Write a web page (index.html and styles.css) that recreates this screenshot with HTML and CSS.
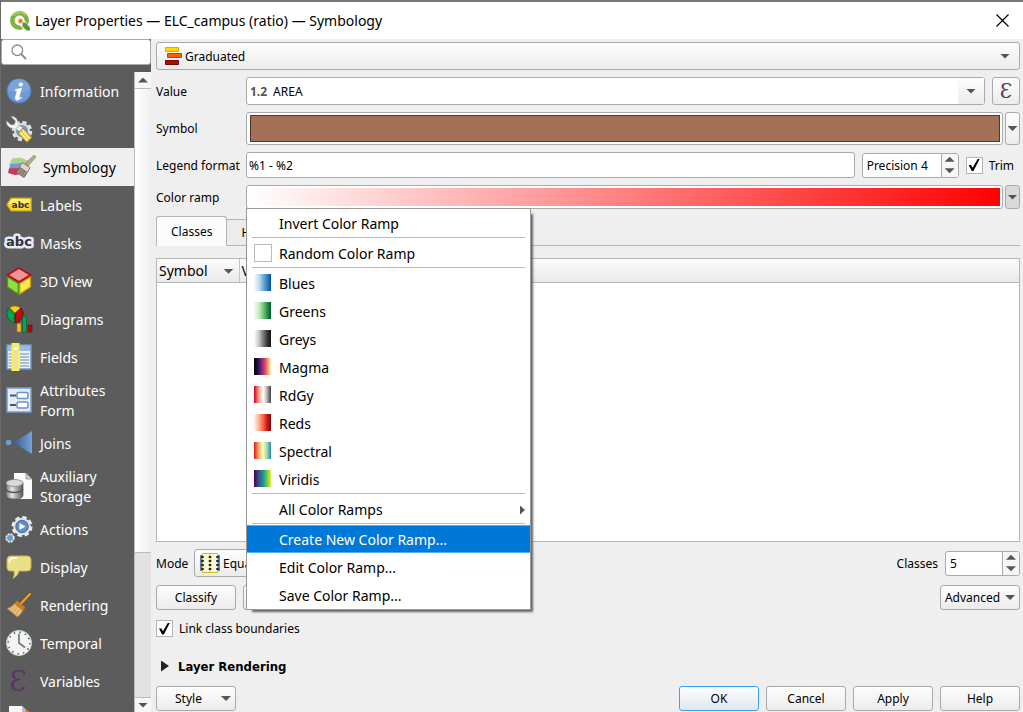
FILE: index.html
```html
<!DOCTYPE html>
<html lang="en">
<head>
<meta charset="utf-8">
<title>Layer Properties — ELC_campus (ratio) — Symbology</title>
<link rel="stylesheet" href="styles.css">
</head>
<body>
<div class="window">
  <header class="titlebar">
    <svg class="logo" viewBox="0 0 20 20" aria-hidden="true">
      <circle cx="9.500" cy="9.500" r="7.200" fill="none" stroke="#7eb344" stroke-width="4.600"/>
      <path d="M3 5a8 8 0 0 1 13-1" fill="none" stroke="#a3cc63" stroke-width="2"/>
      <path d="M8.500 8l5 .5 6.500 7.500v4h-4.500L8.500 13z" fill="#fff"/>
      <path d="M12.500 11.500h3l4.500 5v3h-3.500l-4-4z" fill="#5b9438"/>
      <circle cx="10.500" cy="10" r="2.800" fill="#f7c9a0"/>
      <circle cx="10.500" cy="10" r="1.900" fill="#ee7913"/>
    </svg>
    <h1 class="title">Layer Properties — ELC_campus (ratio) — Symbology</h1>
    <button class="close" aria-label="Close"><svg viewBox="0 0 13 13"><path d="M.5.5l12 12M12.500.5l-12 12" stroke="#000" fill="none" stroke-width="1.200"/></svg></button>
  </header>

  <div class="body">
    <aside class="sidebar">
      <label class="search">
        <svg viewBox="0 0 16 16" aria-hidden="true"><circle cx="6.300" cy="6.300" r="5.300" fill="none" stroke="#888" stroke-width="1.300"/><path d="M10.200 10.200L15 15" stroke="#888" stroke-width="1.800"/></svg>
        <input type="text" aria-label="Search">
      </label>
      <div class="list-area">
        <nav class="pages">
          <a href="#" class="page"><svg viewBox="0 0 26 26"><circle cx="13" cy="13" r="12.500" fill="#4d80bd"/><circle cx="13" cy="13" r="11.300" fill="#6e9bd1"/><path d="M2 12a11 11 0 0 1 22 0q-11 5-22 0" fill="#7ba4d7"/><circle cx="14.800" cy="6.500" r="2.100" fill="#fff"/><path d="M9.500 11.500l6-1.200-2.500 9q-.3 1.500 2.300-.3l.4.600q-3 3-5.300 2.500-1.700-.5-1-3l1.700-5.800q0-1-1.800-.8z" fill="#fff" stroke="#fff" stroke-width=".6"/></svg><span>Information</span></a>
          <a href="#" class="page"><svg viewBox="0 0 26 26"><circle cx="16" cy="15" r="8.500" fill="none" stroke="#e3e3e3" stroke-width="3.500" stroke-dasharray="4 2.700"/><circle cx="16" cy="15" r="7" fill="#6d96c8" stroke="#ddd" stroke-width="2"/><path d="M5 .5l4.500 4.500-1 3.500-3.500.5L.5 5Q0 10 5 12q3 .3 5 2.500l4-4Q12 8 11.500 5 10 0 5 .5z" fill="#f4f4f4" stroke="#aaa" stroke-width=".5"/><path d="M10 12.500l3.500-3.500 4 3-4 4z" fill="#eee" stroke="#777" stroke-width=".6"/><path d="M12 17.500l5-5.500 9 9.500-5 5z" fill="#e8c84e" stroke="#8c7520" stroke-width=".8"/><path d="M14.500 16.500l7 8M16.500 14.500l7 8" stroke="#fff09b" stroke-width="1.500"/></svg><span>Source</span></a>
          <a href="#" class="page selected"><svg viewBox="0 0 28 24"><path d="M4 3.500l8-1 8 3-4 6-15-1.500z" fill="#acd491"/><path d="M2.500 9l12-1v6L1 14z" fill="#749bc9"/><path d="M1 13.500l11-.5 2 6-7 1-7-2z" fill="#cf3854"/><path d="M26.500.5Q28 1 27.500 2.500L20 11l-3-2.500L25.500.7z" fill="#b7aa7d" stroke="#7c745b" stroke-width=".6"/><path d="M14 7.500l8 5-2.500 5L11.500 12z" fill="#ded9c6" stroke="#716d60" stroke-width=".8"/><path d="M11.500 12l8 5.500Q18 21 16 23L8 17.500q2-2 3.500-5.500z" fill="#817b70"/><path d="M13 14l-3 4M15 15.500l-2.500 4M17.500 17l-2.500 4" stroke="#b1aa99"/></svg><span>Symbology</span></a>
          <a href="#" class="page"><svg viewBox="0 0 26 26"><path d="M.7 12.500L5 6h20.300v13H5z" fill="#f4d83d" stroke="#c49e00" stroke-width="1.200"/><path d="M5.500 7H24v5H2z" fill="#ffed76"/><text x="14.500" y="16" text-anchor="middle" class="abc-label">abc</text></svg><span>Labels</span></a>
          <a href="#" class="page"><svg viewBox="0 0 26 26"><text x="13" y="16" text-anchor="middle" class="abc-mask">abc</text></svg><span>Masks</span></a>
          <a href="#" class="page"><svg viewBox="0 0 26 28"><path d="M13 1l11.500 7L13 15 1.500 8z" fill="#f49393" stroke="#b30d18" stroke-width="1.600"/><path d="M1.500 10l10.800 6.500v10.500L1.500 20z" fill="#91df3a" stroke="#4d9911" stroke-width="1.300"/><path d="M24.500 10l-10.800 6.500v10.500l10.800-7z" fill="#ffe453" stroke="#c6a000" stroke-width="1.300"/></svg><span>3D View</span></a>
          <a href="#" class="page"><svg viewBox="0 0 26 28"><path d="M9 8.500L3.500 3a8.500 8.500 0 0 1 11 0z" fill="#ffcf05" stroke="#9c7a00" stroke-width=".7"/><path d="M9 8.500v9A8.700 8.700 0 0 1 3 3z" fill="#00a650" stroke="#14542d" stroke-width=".8"/><path d="M9 8.500v9A8.700 8.700 0 0 0 15 3z" fill="#bf0d0d" stroke="#6b0000" stroke-width=".8"/><path d="M11 18.500h4v8.500h-4z" fill="#fcb72e" stroke="#a66f00" stroke-width=".6"/><path d="M16.500 11.500h4V27h-4z" fill="#00a853" stroke="#0b5a30" stroke-width=".6"/><path d="M22 20h4v7h-4z" fill="#b40c0c" stroke="#6b0000" stroke-width=".6"/></svg><span>Diagrams</span></a>
          <a href="#" class="page"><svg viewBox="0 0 26 28"><path d="M1 2h24v24H1z" fill="#f0f2f4" stroke="#6e94c6" stroke-width="1.600"/><path d="M2 3h22v5H2z" fill="#9bbce2"/><path d="M2.500 11h4M2.500 14h4M2.500 17h4M2.500 20h4M2.500 23h4M14 11h9M14 14h9M14 17h9M14 20h9M14 23h9" stroke="#6587b0" stroke-width="1.200"/><path d="M6.500 1h6v26h-6z" fill="#eadfb0" stroke="#fcf445" stroke-width="2"/><circle cx="9.500" cy="5.500" r="1.600" fill="#fff"/></svg><span>Fields</span></a>
          <a href="#" class="page"><svg viewBox="0 0 26 26"><path d="M1 1h24v24H1z" fill="#e9eaec" stroke="#749dcc" stroke-width="1.500"/><path d="M4 8.500h6M4 18h6" stroke="#375c83" stroke-width="2"/><rect x="11" y="5.500" width="11" height="6" rx="1.500" fill="#fff" stroke="#6b93c5" stroke-width="1.500"/><rect x="11" y="15" width="11" height="6" rx="1.500" fill="#fff" stroke="#6b93c5" stroke-width="1.500"/></svg><span>Attributes Form</span></a>
          <a href="#" class="page"><svg viewBox="0 0 26 26"><defs><linearGradient id="join"><stop offset="0" stop-color="#345e91"/><stop offset="1" stop-color="#77a2d8"/></linearGradient></defs><circle cx="2.500" cy="12.500" r="2.800" fill="#6e9bd1"/><path d="M7.500 12.500L26 1v23z" fill="url(#join)"/></svg><span>Joins</span></a>
          <a href="#" class="page"><svg viewBox="0 0 26 28"><defs><linearGradient id="drum"><stop offset="0" stop-color="#777"/><stop offset=".35" stop-color="#e5e5e5"/><stop offset="1" stop-color="#555"/></linearGradient></defs><path d="M8 1h12l6 6v20H8z" fill="#fbfbfb"/><path d="M20 1v6h6z" fill="#ccc" stroke="#777" stroke-width=".6"/><path d="M0 11v12q0 4 8.500 4t8.500-4V11z" fill="url(#drum)" stroke="#555" stroke-width=".7"/><ellipse cx="8.500" cy="11" rx="8.500" ry="3.500" fill="#dadada" stroke="#777" stroke-width=".7"/><path d="M0 17q1 3.500 8.500 3.500T17 17" fill="none" stroke="#555" stroke-width="1.300"/></svg><span>Auxiliary Storage</span></a>
          <a href="#" class="page"><svg viewBox="0 0 26 28"><circle cx="16" cy="11.500" r="9" fill="none" stroke="#eee" stroke-width="3" stroke-dasharray="4.300 2.770"/><circle cx="16" cy="11.500" r="7.800" fill="#fff" stroke="#e3e3e3" stroke-width="2"/><circle cx="16" cy="11.500" r="6.300" fill="#5e8fca" stroke="#2f5a8c" stroke-width=".8"/><path d="M13.500 8l6 3.500-6 3.500z" fill="#fff"/><circle cx="4" cy="23" r="3.800" fill="#6e9bd1" stroke="#e5e5e5" stroke-width="1.800" stroke-dasharray="2.200 .8"/></svg><span>Actions</span></a>
          <a href="#" class="page"><svg viewBox="0 0 26 26"><path d="M4.500 2h17Q25 2 25 5.500v8q0 3.500-3.500 3.500H13q-1 5-6 7.500 2-4 1-7.500H4.500Q1 17 1 13.500v-8Q1 2 4.500 2z" fill="#eae08a" stroke="#c7b24a"/><path d="M3.500 9V7Q3.500 4 8 4h3" fill="none" stroke="#fff" stroke-width="1.500"/></svg><span>Display</span></a>
          <a href="#" class="page"><svg viewBox="0 0 26 26"><path d="M24 2L15 11.500" stroke="#7d4b0b" stroke-width="3.600" stroke-linecap="round"/><path d="M24 2L15 11.500" stroke="#e7a03d" stroke-width="2.300" stroke-linecap="round"/><path d="M11 8.500l8.500 7-2.500 3-8.500-7z" fill="#ce7c1f"/><path d="M8.500 11.500l8.500 7q-2 4-5.500 6.500L1 16.500q5-1.500 7.500-5z" fill="#e7ba75" stroke="#b2772a" stroke-width=".8"/><path d="M8.500 13.500l-3.500 4.500M11 15.500l-3.500 4.500M13.500 17.500l-3.500 4.500" stroke="#cf9c55" stroke-width=".8"/></svg><span>Rendering</span></a>
          <a href="#" class="page"><svg viewBox="0 0 26 26"><circle cx="13" cy="13" r="12.500" fill="#f4f4f2" stroke="#d2d2d2"/><circle cx="13" cy="13" r="10.800" fill="none" stroke="#3b6ca5" stroke-width="1.600" stroke-dasharray="1.500 4.155"/><path d="M13 3.500V13l6 4.500" fill="none" stroke="#777" stroke-width="1.700"/></svg><span>Temporal</span></a>
          <a href="#" class="page"><svg viewBox="0 0 26 26"><text x="12" y="23" text-anchor="middle" class="epsilon">Ɛ</text></svg><span>Variables</span></a>
          <a href="#" class="page" aria-label="Metadata"><svg viewBox="0 0 26 26"><path d="M3 0h13l6 6v20H3z" fill="#f6f6f6"/><path d="M16 0v6h6z" fill="#bbb"/><path d="M19 2l6 5-4 4z" fill="#df693c"/></svg></a>
        </nav>
        <div class="scrollbar">
          <button class="scroll-end" aria-label="Scroll up"><i class="arrow up"></i></button>
          <div class="thumb"></div>
          <div class="groove"></div>
          <button class="scroll-end last" aria-label="Scroll down"><i class="arrow"></i></button>
        </div>
      </div>
    </aside>

    <main class="panel">
      <div class="combo raised">
        <svg class="graduated" viewBox="0 0 18 18" aria-hidden="true"><path d="M1.500.5h13v4h-13z" fill="#ffd800" stroke="#e0a800"/><path d="M3.500 6.500h14v4h-14z" fill="#ff5d0c" stroke="#c64200"/><path d="M1.500 13.500h13v4h-13z" fill="#b50d00" stroke="#7a0500"/></svg>
        <select aria-label="Renderer"><option>Graduated</option></select>
        <i class="arrow"></i>
      </div>

      <div class="row">
        <label class="name" for="value">Value</label>
        <div class="combo editable">
          <span class="type">1.2</span>
          <input id="value" type="text" value="AREA">
          <button class="drop" aria-label="Show fields"><i class="arrow"></i></button>
        </div>
        <button class="button expression" aria-label="Expression"><span class="eps">Ɛ</span></button>
      </div>

      <div class="row split tall">
        <span class="name">Symbol</span>
        <button class="swatch" aria-label="Change symbol"><span class="fill brown"></span></button>
        <button class="button side" aria-label="Symbol options"><i class="arrow"></i></button>
      </div>

      <div class="row legend">
        <label class="name" for="legend">Legend format</label>
        <input class="field grow" id="legend" type="text" value="%1 - %2">
        <div class="spin">
          <input type="text" aria-label="Precision" value="Precision 4" class="precision">
          <span class="steps"><button aria-label="Increase"><i class="arrow up"></i></button><button aria-label="Decrease"><i class="arrow"></i></button></span>
        </div>
        <label class="check"><input type="checkbox" checked>Trim</label>
      </div>

      <div class="row split ramp-row">
        <span class="name">Color ramp</span>
        <button class="swatch" aria-label="Edit color ramp"><span class="fill ramp"></span></button>
        <button class="button side pressed" aria-label="Color ramp menu"><i class="arrow"></i></button>
        <div class="menu" role="menu">
          <button role="menuitem">Invert Color Ramp</button>
          <hr>
          <button role="menuitem"><i class="chip none"></i>Random Color Ramp</button>
          <hr>
          <button role="menuitem"><i class="chip blues"></i>Blues</button>
          <button role="menuitem"><i class="chip greens"></i>Greens</button>
          <button role="menuitem"><i class="chip greys"></i>Greys</button>
          <button role="menuitem"><i class="chip magma"></i>Magma</button>
          <button role="menuitem"><i class="chip rdgy"></i>RdGy</button>
          <button role="menuitem"><i class="chip reds"></i>Reds</button>
          <button role="menuitem"><i class="chip spectral"></i>Spectral</button>
          <button role="menuitem"><i class="chip viridis"></i>Viridis</button>
          <hr>
          <button role="menuitem">All Color Ramps<i class="arrow right"></i></button>
          <hr>
          <button role="menuitem" class="active">Create New Color Ramp...</button>
          <button role="menuitem">Edit Color Ramp...</button>
          <button role="menuitem">Save Color Ramp...</button>
        </div>
      </div>

      <div class="tabs" role="tablist">
        <button class="tab current" role="tab">Classes</button>
        <button class="tab" role="tab">Histogram</button>
      </div>

      <div class="classes">
        <table>
          <thead><tr><th class="symbol-col"><span class="sort">Symbol<i class="arrow"></i></span></th><th class="values-col">Values</th><th>Legend</th></tr></thead>
        </table>
      </div>

      <div class="row mode">
        <label class="name" for="mode">Mode</label>
        <div class="combo raised mode-combo">
          <svg viewBox="0 0 20 20" aria-hidden="true"><path d="M1 2v16M19 2v16" stroke="#5683bb" stroke-width="2"/><path d="M2.500.5h15v19h-15zM10 0v20" fill="#fbf7dc" stroke="#d8bd22"/><path d="M2.500 3v14M10 3v14M17.500 3v14" stroke="#222" stroke-width="2.500" stroke-dasharray="2 2"/></svg>
          <select id="mode"><option>Equal Count (Quantile)</option></select>
        </div>
        <label class="count" for="count">Classes</label>
        <div class="spin">
          <input id="count" type="text" value="5" class="number">
          <span class="steps"><button aria-label="More classes"><i class="arrow up"></i></button><button aria-label="Fewer classes"><i class="arrow"></i></button></span>
        </div>
      </div>

      <div class="row actions">
        <button class="button">Classify</button>
        <button class="button small" aria-label="Add class"></button>
        <button class="button small" aria-label="Remove class"></button>
        <button class="button end advanced">Advanced<i class="arrow"></i></button>
      </div>

      <label class="check link"><input type="checkbox" checked>Link class boundaries</label>

      <button class="rendering"><i class="arrow expand"></i>Layer Rendering</button>

      <footer class="row footer">
        <button class="button style">Style<i class="arrow"></i></button>
        <button class="button end ok">OK</button>
        <button class="button">Cancel</button>
        <button class="button">Apply</button>
        <button class="button">Help</button>
      </footer>
    </main>
  </div>
</div>
</body>
</html>
```
FILE: styles.css
```css
* { box-sizing: border-box; }
body { margin: 0; }
body, button, input, select {
  font-family: "Noto Sans", "DejaVu Sans Condensed", sans-serif;
  font-size: 12px;
  color: #000;
}
button, input, select { margin: 0; padding: 0; border: 0; background: none; outline: 0; }
select { appearance: none; flex: 1; min-width: 0; }
svg { display: block; flex: none; }

.window {
  display: flex;
  flex-direction: column;
  height: 100vh;
  background: #efefef;
  border-left: 1px solid #6b6b6b;
  overflow: hidden;
}
.titlebar {
  display: flex;
  align-items: center;
  flex: none;
  height: 39px;
  padding: 0 14px 0 9px;
  background: #fff;
  border-top: 2px solid #777;
}
.logo { width: 20px; height: 20px; }
.title {
  flex: 1;
  margin: 0 0 0 5px;
  font: 400 14px "Noto Sans", sans-serif;
}
.close { width: 13px; height: 13px; }

.body { display: flex; flex: 1; min-height: 0; }

/* Page list */
.sidebar { display: flex; flex-direction: column; flex: none; width: 150px; background: #5c5c5c; }
.search {
  display: flex;
  align-items: center;
  flex: none;
  height: 26px;
  padding: 0 9px;
  margin-bottom: 7px;
  background: #fff;
  border: 1px solid #aaa;
  border-radius: 3px;
}
.search svg { width: 16px; height: 16px; }
.search input { flex: 1; min-width: 0; }
.list-area { display: flex; flex: 1; min-height: 0; }
.pages { flex: 1; overflow: hidden; }
.page {
  display: flex;
  align-items: center;
  gap: 8px;
  min-height: 38px;
  padding: 3px 14px 3px 5px;
  color: #fff;
  font: 14px/20px "Noto Sans", sans-serif;
  text-decoration: none;
}
.page span { padding-top: 2px; }
.page svg { width: 26px; height: 28px; overflow: visible; }
.page.selected { padding-left: 7px; gap: 7px; background: #efefef; color: #000; }
.page.selected svg { width: 28px; }
.abc-label { font: bold 9px "DejaVu Sans", sans-serif; fill: #333; }
.abc-mask {
  font: bold 13px "DejaVu Sans", sans-serif;
  fill: #333;
  stroke: #e8ebfa;
  stroke-width: 5px;
  stroke-linejoin: round;
  paint-order: stroke;
}
.epsilon { font: 28px "DejaVu Serif", serif; fill: #5a3264; }

.scrollbar {
  display: flex;
  flex-direction: column;
  flex: none;
  width: 17px;
  border-left: 1px solid #bbb;
  background: #fff;
}
.scroll-end {
  display: grid;
  place-items: center;
  flex: none;
  height: 17px;
  background: #f7f7f7;
  border-bottom: 1px solid #bbb;
}
.scroll-end.last { height: 15px; border-bottom: 0; border-top: 1px solid #bbb; }
.thumb { flex: 464; background: linear-gradient(90deg, #fff, #efefef); border-bottom: 1px solid #bbb; }
.groove { flex: 144; background: #e2e2e2; }

.arrow {
  flex: none;
  width: 10px;
  height: 5px;
  background: #555;
  clip-path: polygon(0 0, 100% 0, 50% 100%);
}
.arrow.up { clip-path: polygon(50% 0, 100% 100%, 0 100%); }
.arrow.right { width: 5px; height: 9px; clip-path: polygon(0 0, 100% 50%, 0 100%); }

/* Settings */
.panel {
  display: flex;
  flex-direction: column;
  flex: 1;
  min-width: 0;
  gap: 7px;
  padding: 3px 3px 1px 5px;
}
.row { display: flex; align-items: center; gap: 7px; flex: none; }
.name { flex: none; width: 83px; white-space: nowrap; }
.combo, .button, .field, .spin, .swatch {
  border: 1px solid #aaa;
  border-radius: 3px;
  background: #fff;
}
.combo { display: flex; align-items: center; flex: none; height: 28px; }
.raised, .button { background: linear-gradient(#fdfdfd, #ececec); }
.combo.raised { padding: 0 9px 0 7px; gap: 3px; }
.graduated { width: 18px; height: 18px; }
.combo.editable { flex: 1; padding-left: 3px; }
.type { color: #555; font-weight: bold; }
.combo input { flex: 1; min-width: 0; margin-left: 6px; }
.drop {
  display: grid;
  place-items: center;
  width: 26px;
  height: 26px;
  background: linear-gradient(#fdfdfd, #ececec);
}
.button {
  display: flex;
  align-items: center;
  justify-content: center;
  flex: none;
  width: 80px;
  height: 25px;
}
.button.expression { width: 28px; height: 28px; }
.eps { color: #5a3264; font: 20px/20px "DejaVu Serif", serif; }

.split { position: relative; gap: 2px; height: 24px; }
.split .name { width: 88px; }
.split.tall { height: 33px; }
.swatch { display: flex; flex: 1; height: 100%; padding: 2px 2px 2px 3px; }
.fill { flex: 1; align-self: stretch; }
.brown { background: #a57058; border: 1px solid #50352b; }
.ramp { background: linear-gradient(90deg, #fff, #f00); }
.button.side { width: 15px; height: 100%; }
.button.pressed { background: #dadada; }

.legend { height: 26px; }
.field { height: 26px; padding: 0 2px; }
.grow { flex: 1; min-width: 0; }
.spin { display: flex; flex: none; height: 25px; overflow: hidden; }
.spin input { padding-left: 4px; }
.precision { width: 78px; }
.number { width: 56px; }
.steps { display: flex; flex-direction: column; width: 17px; border-left: 1px solid #aaa; background: #f6f6f6; }
.steps button { display: grid; place-items: center; flex: 1; }
.check { display: flex; align-items: center; flex: none; gap: 6px; padding-right: 6px; }
.check input {
  appearance: none;
  display: grid;
  place-items: center;
  width: 17px;
  height: 17px;
  border: 1px solid #b5b5b5;
  background: #fff;
}
.check input:checked::before {
  content: "";
  width: 11px;
  height: 12px;
  background: #000;
  clip-path: polygon(0 50%, 22% 50%, 36% 72%, 82% 0, 100% 0, 44% 100%, 28% 100%);
}

.menu {
  position: absolute;
  z-index: 1;
  top: 23px;
  left: 90px;
  width: 285px;
  background: #fff;
  border: 1px solid #979797;
  box-shadow: 4px 4px 2px -2px #666;
}
.menu button {
  display: flex;
  align-items: center;
  position: relative;
  width: 100%;
  height: 28px;
  padding: 2px 5px 0 32px;
  font: 14px/20px "Noto Sans", sans-serif;
}
.menu hr { height: 2px; margin: 0 5px; border: 0; border-top: 1px solid #bbb; }
.menu .active { background: #0078d7; color: #fff; box-shadow: inset 0 1px #4cb0f9, inset 0 -1px #4cb0f9; }
.menu .right { margin-left: auto; }
.chip { position: absolute; left: 7px; top: 5px; width: 17px; height: 17px; }
.chip.none { width: 18px; height: 18px; border: 1px solid #bbb; }
.blues { background: linear-gradient(90deg, #f7fbff, #c6dbef 30%, #6baed6 55%, #2171b5 85%, #084a91); }
.greens { background: linear-gradient(90deg, #f7fcf5, #c7e9c0 30%, #74c476 55%, #238b45 80%, #00552b); }
.greys { background: linear-gradient(90deg, #fff, #c5c5c5 30%, #777 55%, #333 80%, #111); }
.magma { background: linear-gradient(90deg, #000004, #1c1044 20%, #812581 45%, #e75263 68%, #fec287 90%, #fcfdbf); }
.rdgy { background: linear-gradient(90deg, #ca0020, #f4a582 28%, #fff 55%, #bababa 75%, #404040); }
.reds { background: linear-gradient(90deg, #fff5f0, #fcbba1 25%, #fb6a4a 52%, #cb181d 78%, #7d0510); }
.spectral { background: linear-gradient(90deg, #d7191c, #fdae61 28%, #ffffbf 52%, #abdda4 75%, #2b83ba); }
.viridis { background: linear-gradient(90deg, #440154, #3b528b 28%, #21908c 52%, #5dc963 76%, #fde725); }

.tabs {
  display: flex;
  align-items: flex-end;
  flex: none;
  height: 30px;
  margin-bottom: 5px;
  background: linear-gradient(#b5b5b5, #b5b5b5) bottom / 100% 1px no-repeat;
}
.tab {
  height: 27px;
  padding: 0 14px;
  border: 1px solid #b5b5b5;
  border-left: 0;
  border-radius: 0 3px 0 0;
  background: #ececec;
}
.tab.current {
  height: 30px;
  border-left: 1px solid #b5b5b5;
  border-bottom: 0;
  border-radius: 3px 3px 0 0;
  background: #fcfcfc;
}
.classes { flex: 1; min-height: 0; background: #fff; border: 1px solid #b5b5b5; }
.classes table { width: 100%; border-collapse: collapse; }
.classes th {
  height: 23px;
  padding: 2px 2px 0;
  background: linear-gradient(#fcfcfc, #eaeaea);
  border-bottom: 1px solid #b5b5b5;
  font: 400 14px/20px "Noto Sans", sans-serif;
  text-align: left;
}
.classes .symbol-col { width: 82px; border-right: 1px solid #c5c5c5; }
.classes .values-col { width: 130px; }
.sort { display: flex; align-items: center; justify-content: space-between; padding-right: 3px; }

.mode .name { width: 31px; }
.mode-combo { width: 260px; }
.mode-combo svg { width: 20px; height: 20px; }
.combo.mode-combo { padding-left: 5px; }
.count { margin-left: auto; }
.actions { margin-top: 1px; }
.button.small { width: 32px; }
.end { margin-left: auto; }
.advanced { gap: 5px; }
.link { align-self: flex-start; margin-top: 3px; }
.rendering {
  display: flex;
  align-items: center;
  align-self: flex-start;
  gap: 9px;
  height: 20px;
  margin: 12px 0 3px;
  padding-left: 5px;
  font: bold 13px "DejaVu Sans Condensed", "Noto Sans", sans-serif;
}
.arrow.expand { width: 8px; height: 11px; background: #222; clip-path: polygon(0 0, 100% 50%, 0 100%); }
.button.style { justify-content: space-between; padding: 0 4px 0 18px; }
.button.ok { border-color: #3aa2f5; background: linear-gradient(#fdfdfd, #e2e8ef); }
```
